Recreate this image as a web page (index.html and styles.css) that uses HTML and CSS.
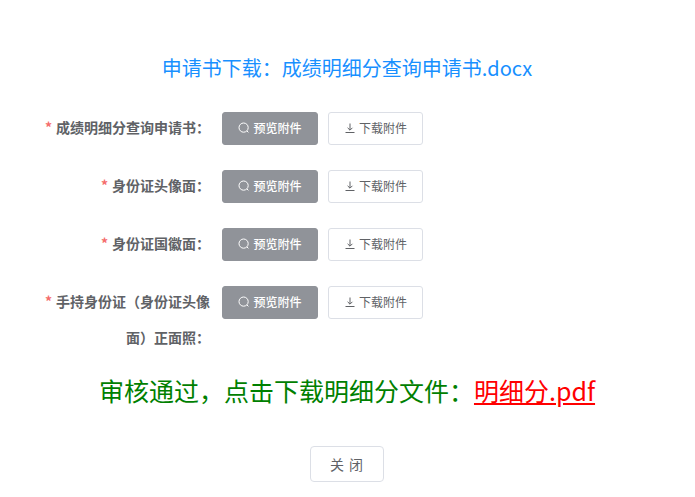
FILE: index.html
```html
<!DOCTYPE html>
<html lang="zh-CN">

  <head>
    <meta charset="UTF-8">
    <meta name="viewport" content="width=device-width, initial-scale=1.0">
    <title>成绩明细分查询</title>
    <link rel="stylesheet" href="styles.css">
  </head>

  <body>
    <div class="dialog">
      <h2 class="apply-title">申请书下载&#xFF1A;成绩明细分查询申请书.docx</h2>

      <form class="attach-form">
        <div class="form-item">
          <label class="form-label"><span class="star">*</span>成绩明细分查询申请书&#xFF1A;</label>
          <div class="form-content">
            <button type="button" class="btn btn-preview">
              <svg class="btn-icon" viewBox="0 0 12 12"><circle cx="5.6" cy="5.6" r="4.6"/><path d="M9 9l1.4 1.4"/></svg>预览附件
            </button>
            <button type="button" class="btn btn-download">
              <svg class="btn-icon" viewBox="0 0 12 12"><path d="M6 1.5v6.5M3.6 5.8L6 8.2l2.4-2.4M1.5 10.5h9"/></svg>下载附件
            </button>
          </div>
        </div>

        <div class="form-item">
          <label class="form-label"><span class="star">*</span>身份证头像面&#xFF1A;</label>
          <div class="form-content">
            <button type="button" class="btn btn-preview">
              <svg class="btn-icon" viewBox="0 0 12 12"><circle cx="5.6" cy="5.6" r="4.6"/><path d="M9 9l1.4 1.4"/></svg>预览附件
            </button>
            <button type="button" class="btn btn-download">
              <svg class="btn-icon" viewBox="0 0 12 12"><path d="M6 1.5v6.5M3.6 5.8L6 8.2l2.4-2.4M1.5 10.5h9"/></svg>下载附件
            </button>
          </div>
        </div>

        <div class="form-item">
          <label class="form-label"><span class="star">*</span>身份证国徽面&#xFF1A;</label>
          <div class="form-content">
            <button type="button" class="btn btn-preview">
              <svg class="btn-icon" viewBox="0 0 12 12"><circle cx="5.6" cy="5.6" r="4.6"/><path d="M9 9l1.4 1.4"/></svg>预览附件
            </button>
            <button type="button" class="btn btn-download">
              <svg class="btn-icon" viewBox="0 0 12 12"><path d="M6 1.5v6.5M3.6 5.8L6 8.2l2.4-2.4M1.5 10.5h9"/></svg>下载附件
            </button>
          </div>
        </div>

        <div class="form-item">
          <label class="form-label"><span class="star">*</span>手持身份证&#xFF08;身份证头像面&#xFF09;正面照&#xFF1A;</label>
          <div class="form-content">
            <button type="button" class="btn btn-preview">
              <svg class="btn-icon" viewBox="0 0 12 12"><circle cx="5.6" cy="5.6" r="4.6"/><path d="M9 9l1.4 1.4"/></svg>预览附件
            </button>
            <button type="button" class="btn btn-download">
              <svg class="btn-icon" viewBox="0 0 12 12"><path d="M6 1.5v6.5M3.6 5.8L6 8.2l2.4-2.4M1.5 10.5h9"/></svg>下载附件
            </button>
          </div>
        </div>
      </form>

      <p class="result">审核通过&#xFF0C;点击下载明细分文件&#xFF1A;<a class="result-link" href="#">明细分.pdf</a></p>

      <div class="footer">
        <button type="button" class="btn-close">关 闭</button>
      </div>
    </div>
  </body>

</html>
```

FILE: styles.css
```css
body {
  margin: 0;
  background-color: #fff;
  font-family: "Noto Sans CJK SC", "Noto Sans", sans-serif;
}

.dialog {
  padding-top: 53px;
}

.apply-title {
  margin: 0;
  padding-right: 1px;
  height: 29px;
  line-height: 29px;
  font-size: 20px;
  font-weight: 400;
  text-align: center;
  color: #1890ff;
}

.attach-form {
  margin-top: 30px;
  padding-left: 40px;
}

.form-item {
  display: flex;
  margin-bottom: 22px;
}

.form-label {
  box-sizing: border-box;
  width: 182px;
  margin: -3px 0 3px;
  padding-right: 12px;
  font-size: 14px;
  font-weight: 700;
  line-height: 36px;
  text-align: right;
  color: #606266;
}

.star {
  margin-right: 4px;
  color: #f56c6c;
}

.form-content {
  display: flex;
  align-items: flex-start;
  gap: 10px;
}

.btn {
  display: flex;
  align-items: center;
  justify-content: center;
  box-sizing: border-box;
  width: 96px;
  height: 33px;
  padding: 0 0 2px;
  border-radius: 3px;
  font-family: inherit;
  font-size: 12px;
}

.btn-icon {
  width: 12px;
  height: 12px;
  margin-right: 3px;
  fill: none;
  stroke: currentColor;
  stroke-width: 1;
}

.btn-preview {
  border: 1px solid #909399;
  background-color: #909399;
  color: #fff;
  font-weight: 500;
}

.btn-download {
  width: 95px;
  border: 1px solid #dcdfe6;
  background-color: #fff;
  color: #606266;
}

.result {
  margin: 0;
  margin-top: -8px;
  padding-right: 1px;
  height: 36px;
  line-height: 36px;
  font-size: 25px;
  text-align: center;
  color: green;
}

.result-link {
  color: red;
}

.footer {
  display: flex;
  justify-content: center;
  margin-top: 38px;
  padding-right: 1px;
}

.btn-close {
  box-sizing: border-box;
  width: 74px;
  height: 36px;
  padding: 0;
  border: 1px solid #dcdfe6;
  border-radius: 4px;
  background-color: #fff;
  font-family: inherit;
  font-size: 14px;
  letter-spacing: 1px;
  color: #606266;
}
```
